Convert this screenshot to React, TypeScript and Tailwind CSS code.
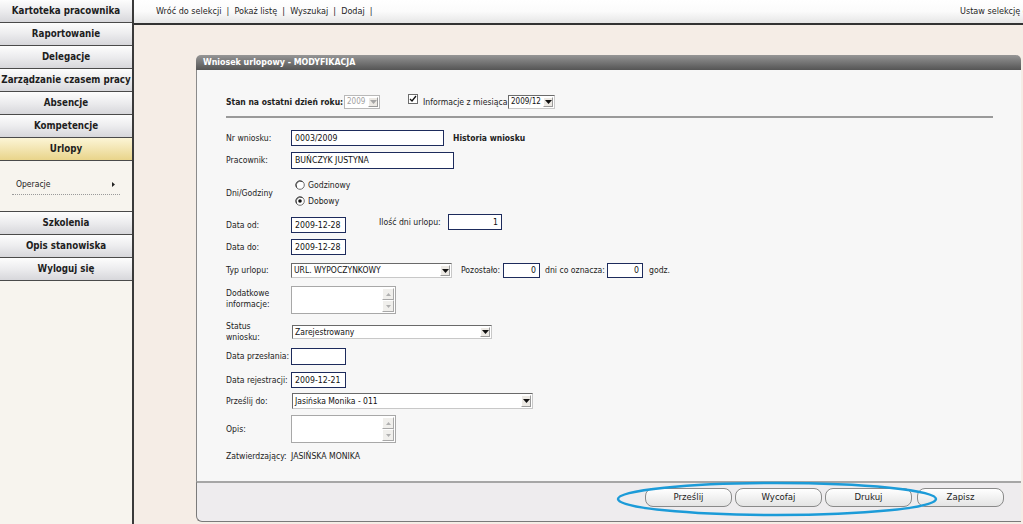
import React from "react";

const FONT = "font-['DejaVu_Sans_Condensed','DejaVu_Sans',sans-serif]";

function SideItem({ label, active }: { label: string; active?: boolean }) {
  return (
    <div
      className={`h-[23px] shrink-0 flex items-center justify-center border-b border-[#4a4a4a] text-[9.7px] font-bold text-[#1e1e1e] whitespace-nowrap pt-px ${
        active
          ? "bg-linear-to-b from-[#fcf5d6] to-[#e9d48a]"
          : "bg-linear-to-b from-[#fdfdfd] via-[#ececee] to-[#d7d7db]"
      }`}
    >
      {label}
    </div>
  );
}

function Arrow({ disabled }: { disabled?: boolean }) {
  return (
    <div className="w-[12px] h-full shrink-0 p-px">
      <div className="w-full h-full bg-[#ece9e4] border border-t-[#fff] border-l-[#fff] border-r-[#9a9a9a] border-b-[#9a9a9a] flex items-center justify-center">
        <svg width="7" height="4" viewBox="0 0 7 4">
          <path d="M0 0h7L3.5 4z" fill={disabled ? "#a5a5a5" : "#111"} />
        </svg>
      </div>
    </div>
  );
}

function Select({
  value,
  w,
  h,
  disabled,
  small,
}: {
  value: string;
  w: string;
  h: string;
  disabled?: boolean;
  small?: boolean;
}) {
  return (
    <div
      className={`${w} ${h} shrink-0 flex bg-white border ${
        disabled ? "border-[#b8b8b8]" : "border-t-[#6a6a6a] border-l-[#6a6a6a] border-r-[#c8c8c8] border-b-[#c8c8c8]"
      }`}
    >
      <div
        className={`flex-1 min-w-0 pl-[2px] flex items-center leading-none whitespace-nowrap overflow-hidden ${
          small ? "text-[8px]" : "text-[8.5px]"
        } ${disabled ? "text-[#a0a0a0]" : "text-[#111]"}`}
      >
        {value}
      </div>
      <Arrow disabled={disabled} />
    </div>
  );
}

function Input({
  value,
  w,
  h = "h-[16px]",
  right,
}: {
  value?: string;
  w: string;
  h?: string;
  right?: boolean;
}) {
  return (
    <div
      className={`${w} ${h} shrink-0 bg-white border border-[#1d2b5c] flex items-center px-[3px] text-[8.7px] leading-none text-[#111] whitespace-nowrap ${
        right ? "justify-end" : ""
      }`}
    >
      {value}
    </div>
  );
}

function ScrollBtn({ up }: { up?: boolean }) {
  return (
    <div className="w-[12px] h-[12px] bg-[#f0efec] border border-t-[#fff] border-l-[#fff] border-r-[#a8a8a8] border-b-[#a8a8a8] flex items-center justify-center">
      <svg width="5" height="3" viewBox="0 0 5 3">
        <path d={up ? "M0 3h5L2.5 0z" : "M0 0h5L2.5 3z"} fill="#b0b0b0" />
      </svg>
    </div>
  );
}

function TextArea() {
  return (
    <div className="w-[105px] h-[28px] shrink-0 bg-white border border-[#a8a8a8] flex justify-end">
      <div className="w-[13px] flex flex-col justify-between py-px pr-px">
        <ScrollBtn up />
        <ScrollBtn />
      </div>
    </div>
  );
}

function Radio({ checked }: { checked?: boolean }) {
  return (
    <svg width="10" height="10" viewBox="0 0 10 10">
      <circle cx="5" cy="5" r="4.3" fill="#fff" stroke="#6f6f6f" strokeWidth="1" />
      <path d="M1.6 7.4A4.3 4.3 0 0 1 7.4 1.6" fill="none" stroke="#404040" strokeWidth="1" />
      {checked && <circle cx="5" cy="5" r="1.8" fill="#111" />}
    </svg>
  );
}

const Label = ({ children }: { children: React.ReactNode }) => (
  <div className="w-[65px] shrink-0 text-[8.6px] leading-[11px] text-[#222] whitespace-nowrap">{children}</div>
);

function FooterBtn({ label }: { label: string }) {
  return (
    <div className="w-[87px] h-[19px] rounded-[8px] border border-[#8a8a8a] bg-linear-to-b from-[#ffffff] to-[#e4e4e4] flex items-center justify-center text-[9.5px] text-[#222]">
      {label}
    </div>
  );
}

export default function App() {
  return (
    <div className={`w-[1023px] h-[524px] flex overflow-hidden bg-[#f5ede6] ${FONT}`}>
      <aside className="w-[134px] shrink-0 bg-[#f7f4ee] border-r-2 border-[#3a3a3a] flex flex-col">
        <SideItem label="Kartoteka pracownika" />
        <SideItem label="Raportowanie" />
        <SideItem label="Delegacje" />
        <SideItem label="Zarządzanie czasem pracy" />
        <SideItem label="Absencje" />
        <SideItem label="Kompetencje" />
        <SideItem label="Urlopy" active />
        <div className="h-[51px] shrink-0 border-b border-[#4a4a4a] bg-[#f7f4ee] px-[12px] pt-[17px]">
          <div className="flex items-center justify-between border-b border-dotted border-[#9a9a9a] pb-[3px] pl-[4px] pr-[5px] text-[8.5px] text-[#222]">
            <span>Operacje</span>
            <svg width="3" height="5" viewBox="0 0 3 5">
              <path d="M0 0l3 2.5L0 5z" fill="#222" />
            </svg>
          </div>
        </div>
        <SideItem label="Szkolenia" />
        <SideItem label="Opis stanowiska" />
        <SideItem label="Wyloguj się" />
      </aside>

      <main className="flex-1 min-w-0 flex flex-col">
        <div className="h-[25px] shrink-0 border-b-2 border-[#333] bg-linear-to-b from-[#ffffff] via-[#fbfbfb] to-[#e6e6e6] flex items-center overflow-hidden text-[9px] text-[#1e1e1e] whitespace-nowrap">
          <div className="w-[826px] shrink-0 pl-[22px]">
            Wróć do selekcji &nbsp;|&nbsp; Pokaż listę &nbsp;|&nbsp; Wyszukaj &nbsp;|&nbsp; Dodaj &nbsp;|
          </div>
          <span className="shrink-0">Ustaw selekcję czasu</span>
        </div>

        <div className="flex-1 pt-[30px] pl-[62px]">
          <div className="w-[825px] flex flex-col">
            <div className="h-[15px] rounded-t-[5px] bg-linear-to-b from-[#969696] via-[#757575] to-[#555555] flex items-center pl-[7px] text-[8.8px] font-bold text-white whitespace-nowrap">
              Wniosek urlopowy - MODYFIKACJA
            </div>
            <div className="h-[411px] bg-[#f7f7f7] border-l border-[#8a8a8a] pl-[29px] flex flex-col text-[8.6px] text-[#222]">
              {/* Stan row */}
              <div className="mt-[25px] h-[14px] flex items-center whitespace-nowrap">
                <span className="font-bold text-[8.5px] w-[118px]">Stan na ostatni dzień roku:</span>
                <Select value="2009" w="w-[36px]" h="h-[14px]" disabled small />
                <div className="ml-[28px] w-[10px] h-[10px] border border-[#6d6d6d] bg-white -mt-[6px] flex items-center justify-center">
                  <svg width="8" height="8" viewBox="0 0 8 8">
                    <path d="M1 4l2 2 4-5" fill="none" stroke="#111" strokeWidth="1.3" />
                  </svg>
                </div>
                <span className="ml-[5px] w-[85px]">Informacje z miesiąca</span>
                <Select value="2009/12" w="w-[47px]" h="h-[14px]" small />
              </div>
              <div className="mt-[7px] w-[767px] h-[2px] bg-[#9a9a9a]" />

              {/* Nr wniosku */}
              <div className="mt-[12px] flex items-center whitespace-nowrap">
                <Label>Nr wniosku:</Label>
                <Input value="0003/2009" w="w-[153px]" />
                <span className="ml-[9px] font-bold text-[8.5px]">Historia wniosku</span>
              </div>
              <div className="mt-[6px] flex items-center whitespace-nowrap">
                <Label>Pracownik:</Label>
                <Input value="BUŃCZYK JUSTYNA" w="w-[163px]" h="h-[17px]" />
              </div>

              {/* Dni/Godziny */}
              <div className="mt-[8px] h-[32px] flex items-center">
                <Label>Dni/Godziny</Label>
                <div className="flex flex-col gap-[5px] pl-[4px]">
                  <div className="flex items-center gap-[3px] h-[11px]">
                    <Radio />
                    <span>Godzinowy</span>
                  </div>
                  <div className="flex items-center gap-[3px] h-[11px]">
                    <Radio checked />
                    <span>Dobowy</span>
                  </div>
                </div>
              </div>

              {/* Data od */}
              <div className="mt-[5px] h-[19px] flex items-end whitespace-nowrap">
                <div className="flex items-center">
                  <Label>Data od:</Label>
                  <Input value="2009-12-28" w="w-[55px]" />
                </div>
                <div className="flex items-center ml-[33px] self-start">
                  <span className="w-[69px]">Ilość dni urlopu:</span>
                  <Input value="1" w="w-[54px]" right />
                </div>
              </div>
              <div className="mt-[6px] flex items-center whitespace-nowrap">
                <Label>Data do:</Label>
                <Input value="2009-12-28" w="w-[55px]" />
              </div>

              {/* Typ urlopu */}
              <div className="mt-[8px] flex items-center whitespace-nowrap">
                <Label>Typ urlopu:</Label>
                <Select value="URL. WYPOCZYNKOWY" w="w-[161px]" h="h-[15px]" />
                <span className="ml-[9px] w-[42px]">Pozostało:</span>
                <Input value="0" w="w-[37px]" h="h-[15px]" right />
                <span className="ml-[5px] w-[62px]">dni co oznacza:</span>
                <Input value="0" w="w-[36px]" h="h-[15px]" right />
                <span className="ml-[6px]">godz.</span>
              </div>

              {/* Dodatkowe */}
              <div className="mt-[8px] flex items-start">
                <Label>
                  <div className="pt-[2px]">
                    Dodatkowe
                    <br />
                    informacje:
                  </div>
                </Label>
                <TextArea />
              </div>

              {/* Status */}
              <div className="mt-[7px] h-[22px] flex items-center">
                <Label>
                  Status
                  <br />
                  wniosku:
                </Label>
                <div className="pl-px">
                  <Select value="Zarejestrowany" w="w-[200px]" h="h-[14px]" />
                </div>
              </div>

              <div className="mt-[5px] flex items-center whitespace-nowrap">
                <Label>Data przesłania:</Label>
                <Input w="w-[55px]" h="h-[17px]" />
              </div>
              <div className="mt-[7px] flex items-center whitespace-nowrap">
                <Label>Data rejestracji:</Label>
                <Input value="2009-12-21" w="w-[55px]" />
              </div>
              <div className="mt-[5px] flex items-center whitespace-nowrap">
                <Label>Prześlij do:</Label>
                <div className="pl-px">
                  <Select value="Jasińska Monika - 011" w="w-[241px]" h="h-[16px]" />
                </div>
              </div>
              <div className="mt-[6px] flex items-center">
                <Label>Opis:</Label>
                <TextArea />
              </div>
              <div className="mt-[7px] h-[12px] flex items-center whitespace-nowrap">
                <Label>Zatwierdzający:</Label>
                <span>JASIŃSKA MONIKA</span>
              </div>
            </div>

            <div className="relative h-[41px] bg-[#eeecee] border-t-2 border-t-[#a6a6a6] border-l border-b border-[#7a7a7a] rounded-bl-[6px] flex justify-end items-start pt-[5px] pr-[17px] gap-[3px]">
              <FooterBtn label="Prześlij" />
              <FooterBtn label="Wycofaj" />
              <FooterBtn label="Drukuj" />
              <div className="ml-[2px]">
                <FooterBtn label="Zapisz" />
              </div>
              <svg
                className="absolute left-[418px] top-[-3px] pointer-events-none"
                width="324"
                height="38"
                viewBox="0 0 324 38"
              >
                <ellipse cx="162" cy="19" rx="159" ry="16" fill="none" stroke="#1c9bd8" strokeWidth="2.5" />
              </svg>
            </div>
          </div>
        </div>
      </main>
    </div>
  );
}
